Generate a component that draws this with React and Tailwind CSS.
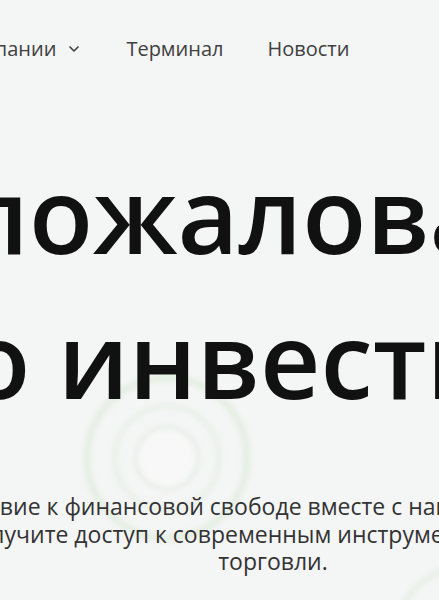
import { ChevronDown } from "lucide-react";

const navItems = [
  { label: "О компании", dropdown: true },
  { label: "Терминал" },
  { label: "Новости" },
];

function Rings() {
  return (
    <svg
      className="pointer-events-none absolute left-0 top-0"
      width="439"
      height="600"
      viewBox="0 0 439 600"
    >
      <defs>
        <filter id="soft" x="-50%" y="-50%" width="200%" height="200%">
          <feGaussianBlur stdDeviation="2.5" />
        </filter>
      </defs>
      <g filter="url(#soft)" fill="none">
        <circle cx="167" cy="458" r="80" stroke="#e4efe2" strokeWidth="7" />
        <circle cx="167" cy="458" r="52" stroke="#e9f0e8" strokeWidth="5" />
        <circle cx="167" cy="458" r="31" stroke="#e7eee7" strokeWidth="4" fill="#f7f8f7" />
        <circle cx="470" cy="640" r="75" stroke="#e8efe6" strokeWidth="6" />
      </g>
    </svg>
  );
}

export default function App() {
  return (
    <div
      className="relative h-[600px] w-full overflow-hidden bg-[#f4f5f5]"
      style={{ fontFamily: '"Open Sans", "Noto Sans", sans-serif' }}
    >
      <Rings />
      <div className="relative -ml-[427px] w-[1400px]">
        <header className="flex pl-[364px] pt-[35px]">
          <nav className="flex items-center gap-[44px] text-[20px] leading-[28px] text-[#404040]">
            {navItems.map((item) => (
              <a key={item.label} href="#" className="flex items-center gap-[10px]">
                {item.label}
                {item.dropdown && <ChevronDown size={16} strokeWidth={2.5} />}
              </a>
            ))}
          </nav>
        </header>

        <section className="text-center">
          <h1 className="mt-[78px] whitespace-nowrap text-[105px] font-semibold leading-[145px] text-[#111]">
            <span className="block">Добро пожаловать в мир</span>
            <span className="block pl-[52px]">умного инвестирования</span>
          </h1>
          <p className="mt-[62px] whitespace-nowrap text-[23px] leading-[27.5px] text-[#333]">
            <span className="block pl-[18px]">
              Начните свое путешествие к финансовой свободе вместе с нашей удобной онлайн-платформой.
            </span>
            <span className="block pl-[36px]">Получите доступ к современным инструментам для умной</span>
            <span className="block">торговли.</span>
          </p>
        </section>
      </div>
    </div>
  );
}
